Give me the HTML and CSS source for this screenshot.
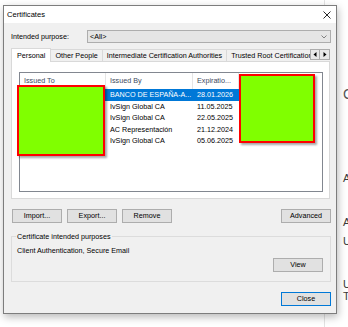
FILE: index.html
```html
<!DOCTYPE html>
<html>
<head>
<meta charset="utf-8">
<link rel="stylesheet" href="styles.css">
</head>
<body>
<div class="page">
  <div class="page-main"></div>
  <div class="page-side">
    <div class="side-line big l1">Configuración</div>
    <div class="side-line l2">Acceso</div>
    <div class="side-line l3">Autenticación</div>
    <div class="side-line l4">Uso</div>
    <div class="side-line l5">Usuario</div>
    <div class="side-line l6">Tipo</div>
  </div>
</div>

<div class="dialog">
  <div class="titlebar">
    <span class="title">Certificates</span>
    <svg class="close-x" width="8" height="8" viewBox="0 0 8 8"><path d="M0.5 0.5L7.5 7.5M7.5 0.5L0.5 7.5" stroke="#111" stroke-width="0.9" fill="none"/></svg>
  </div>
  <div class="body">
    <div class="purpose-row">
      <span class="purpose-label">Intended purpose:</span>
      <div class="combo">
        <span class="combo-text">&lt;All&gt;</span>
        <svg class="chev" width="6" height="4" viewBox="0 0 6 4"><path d="M0.5 0.5L3 3L5.5 0.5" stroke="#666" stroke-width="0.8" fill="none"/></svg>
      </div>
    </div>

    <div class="tabs">
      <div class="tab active">Personal</div>
      <div class="tab">Other People</div>
      <div class="tab">Intermediate Certification Authorities</div>
      <div class="tab last">Trusted Root Certification Authorities</div>
      <div class="tab-scroll">
        <span class="ts-btn"><svg width="4" height="5" viewBox="0 0 4 5"><path d="M3.5 0L0.5 2.5L3.5 5Z" fill="#000"/></svg></span>
        <span class="ts-btn"><svg width="4" height="5" viewBox="0 0 4 5"><path d="M0.5 0L3.5 2.5L0.5 5Z" fill="#000"/></svg></span>
      </div>
    </div>

    <div class="panel">
      <div class="listview">
        <div class="lv-head">
          <div class="hc c1">Issued To</div>
          <div class="hc c2">Issued By</div>
          <div class="hc c3">Expiratio...</div>
          <div class="hc c4"></div>
        </div>
        <div class="lv-row selected"><div class="cell c1"></div><div class="cell c2">BANCO DE ESPAÑA-A...</div><div class="cell c3">28.01.2026</div></div>
        <div class="lv-row"><div class="cell c1"></div><div class="cell c2">IvSign Global CA</div><div class="cell c3">11.05.2025</div></div>
        <div class="lv-row"><div class="cell c1"></div><div class="cell c2">IvSign Global CA</div><div class="cell c3">22.05.2025</div></div>
        <div class="lv-row"><div class="cell c1"></div><div class="cell c2">AC Representación</div><div class="cell c3">21.12.2024</div></div>
        <div class="lv-row"><div class="cell c1"></div><div class="cell c2">IvSign Global CA</div><div class="cell c3">05.06.2025</div></div>
        <div class="redact r1"></div>
        <div class="redact r2"></div>
      </div>
    </div>

    <div class="btn-row">
      <button class="btn">Import...</button>
      <button class="btn">Export...</button>
      <button class="btn">Remove</button>
      <span class="spacer"></span>
      <button class="btn">Advanced</button>
    </div>

    <fieldset class="group">
      <legend class="group-label">Certificate intended purposes</legend>
      <div class="group-text">Client Authentication, Secure Email</div>
      <div class="group-actions"><button class="btn">View</button></div>
    </fieldset>

    <div class="footer">
      <button class="btn default">Close</button>
    </div>
  </div>
</div>
</body>
</html>
```

FILE: styles.css
```css
* { box-sizing: border-box; }
html, body { margin: 0; padding: 0; }
body {
  width: 348px;
  height: 327px;
  overflow: hidden;
  background: #ffffff;
  font-family: "Liberation Sans", Arial, sans-serif;
  position: relative;
}

.page { display: flex; height: 327px; }
.page-main { flex: 0 0 324px; }
.page-side {
  flex: 1;
  border-left: 1px solid #e3e3e3;
  padding-left: 18px;
  padding-top: 86px;
  white-space: nowrap;
  overflow: hidden;
  color: #3a3a3a;
  font-size: 11px;
}
.side-line { height: 12px; line-height: 12px; }
.side-line.big { height: 16px; line-height: 16px; font-size: 14px; color: #555; }
.l2 { margin-top: 70px; }
.l3 { margin-top: 32px; }
.l4 { margin-top: 7px; }
.l5 { margin-top: 31px; }

.dialog {
  position: absolute;
  left: 3px;
  top: 5px;
  width: 334px;
  border: 1px solid #7d7d7d;
  background: #f0f0f0;
  box-shadow: 1px 3px 8px rgba(0,0,0,0.28);
  font-size: 7.2px;
  color: #000;
}

.titlebar {
  height: 17px;
  background: #ffffff;
  display: flex;
  align-items: center;
  padding-left: 3px;
  padding-right: 5px;
}
.title { flex: 1; font-size: 7.6px; color: #000; }
.close-x { display: block; }

.body {
  padding: 7px 5px 7px 7px;
  display: flex;
  flex-direction: column;
}

.purpose-row { display: flex; height: 13px; align-items: center; }
.purpose-label { width: 76px; line-height: 13px; }
.combo {
  flex: 1;
  height: 13px;
  border: 1px solid #adadad;
  background: #e5e5e5;
  display: flex;
  align-items: center;
  padding-left: 2px;
  padding-right: 3px;
}
.combo-text { flex: 1; }
.chev { display: block; }

.tabs {
  margin-top: 5px;
  height: 14px;
  margin-bottom: -1px;
  display: flex;
  align-items: flex-end;
  position: relative;
  z-index: 1;
  margin-right: 1px;
}
.tab {
  height: 12px;
  line-height: 11px;
  padding: 0 4px;
  border: 1px solid #d9d9d9;
  border-bottom: none;
  border-left: none;
  background: #f0f0f0;
  white-space: nowrap;
  margin-bottom: 1px;
}
.tab.active {
  height: 14px;
  line-height: 13px;
  padding: 0 5px;
  background: #ffffff;
  border-left: 1px solid #d9d9d9;
  margin-bottom: 0;
}
.tab.last {
  flex: 1;
  min-width: 0;
  overflow: hidden;
  border-right: none;
}
.tab-scroll {
  display: flex;
  height: 11px;
  margin-bottom: 2px;
  margin-right: 0;
}
.ts-btn {
  width: 10px;
  height: 11px;
  border: 1px solid #adadad;
  background: #e9e9e9;
  display: flex;
  align-items: center;
  justify-content: center;
}
.ts-btn + .ts-btn { border-left: none; }
.ts-btn svg { display: block; }

.panel {
  height: 138px;
  border: 1px solid #d9d9d9;
  background: #ffffff;
  padding: 10px 6px 6px 7px;
  margin-right: 1px;
}
.listview {
  position: relative;
  height: 120px;
  border: 1px solid #828790;
  background: #ffffff;
}
.lv-head {
  display: flex;
  height: 16px;
  align-items: stretch;
}
.hc {
  border-right: 1px solid #e5e5e5;
  padding-left: 4px;
  line-height: 16px;
  color: #3b4a60;
  white-space: nowrap;
  overflow: hidden;
}
.hc.c4 { border-right: none; flex: 1; }
.c1 { width: 86px; }
.c2 { width: 87px; }
.c3 { width: 46px; }

.lv-row {
  display: flex;
  width: fit-content;
  height: 11.5px;
}
.cell {
  padding-left: 4px;
  line-height: 11.5px;
  white-space: nowrap;
  overflow: hidden;
}
.lv-row.selected { background: #0078d7; color: #ffffff; }

.redact {
  position: absolute;
  border: 2px solid #ff0000;
  background: #80ff00;
  box-shadow: 2px 2px 2px rgba(0,0,0,0.35);
}
.r1 { left: -3px; top: 12px; width: 88px; height: 71px; }
.r2 { left: 219px; top: 1px; width: 76px; height: 69px; }

.btn-row {
  margin-top: 10px;
  height: 14px;
  display: flex;
  gap: 5px;
  padding-left: 1px;
}
.spacer { flex: 1; }
.btn {
  width: 50px;
  height: 14px;
  padding: 0;
  margin: 0;
  border: 1px solid #adadad;
  background: #e1e1e1;
  font-family: "Liberation Sans", Arial, sans-serif;
  font-size: 7.2px;
  color: #000;
  line-height: 12px;
  text-align: center;
}
.btn.default { border-color: #0078d7; }

.group {
  margin: 9px 0 0 0;
  padding: 0 7px 9px 4px;
  border: 1px solid #dcdcdc;
  min-width: 0;
}
.group-label {
  padding: 0 1px;
  height: 9px;
  line-height: 9px;
}
.group-text {
  margin-top: 5px;
  line-height: 10px;
  height: 10px;
  padding-left: 1px;
}
.group-actions {
  margin-top: 2px;
  display: flex;
  justify-content: flex-end;
}

.footer {
  margin-top: 10px;
  display: flex;
  justify-content: flex-end;
}
```
